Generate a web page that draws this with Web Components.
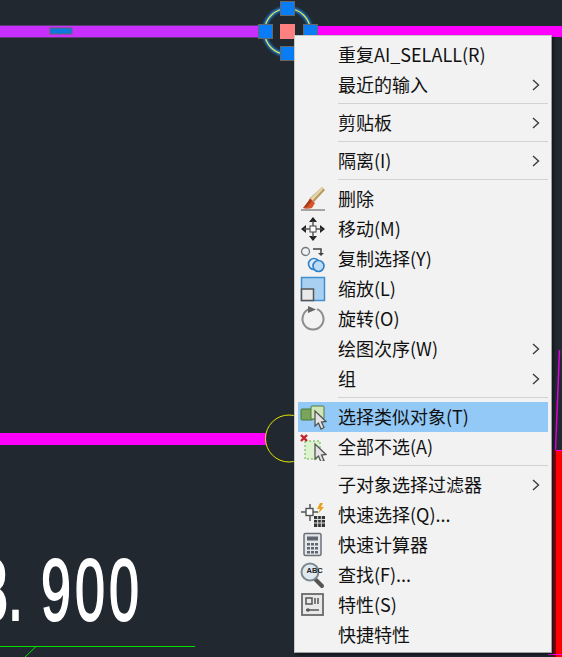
<!doctype html>
<html lang="zh">
<head>
<meta charset="utf-8">
<title>CAD context menu</title>
<style>
  html,body{margin:0;height:100%;background:#212830;overflow:hidden}
  body{position:relative;width:562px;height:657px}
</style>
</head>
<body>
<cad-canvas></cad-canvas>
<cad-menu>
  <cad-item>重复AI_SELALL(R)</cad-item>
  <cad-item sub>最近的输入</cad-item>
  <cad-sep></cad-sep>
  <cad-item sub>剪贴板</cad-item>
  <cad-sep></cad-sep>
  <cad-item sub>隔离(I)</cad-item>
  <cad-sep></cad-sep>
  <cad-item icon="erase">删除</cad-item>
  <cad-item icon="move">移动(M)</cad-item>
  <cad-item icon="copy">复制选择(Y)</cad-item>
  <cad-item icon="scale">缩放(L)</cad-item>
  <cad-item icon="rotate">旋转(O)</cad-item>
  <cad-item sub>绘图次序(W)</cad-item>
  <cad-item sub>组</cad-item>
  <cad-sep></cad-sep>
  <cad-item icon="similar" active>选择类似对象(T)</cad-item>
  <cad-item icon="deselect">全部不选(A)</cad-item>
  <cad-sep></cad-sep>
  <cad-item sub>子对象选择过滤器</cad-item>
  <cad-item icon="qselect">快速选择(Q)...</cad-item>
  <cad-item icon="calc">快速计算器</cad-item>
  <cad-item icon="find">查找(F)...</cad-item>
  <cad-item icon="props">特性(S)</cad-item>
  <cad-item>快捷特性</cad-item>
</cad-menu>
<script>
const ICONS = {
  erase: `<path d="M1 24h24" stroke="#8a8a8a" stroke-width="1.500"/><path d="M22 1l3 3-11 12-4-4z" fill="#b89a60"/><path d="M22 1l1.500 1.500-11 12-2-2z" fill="#e6d6ae"/><path d="M10 12l5 5-3 5c-3 1-7 1-9 0 3-2 5-6 7-10z" fill="#d9552b"/><path d="M10 13l2 2-5 6-4 1z" fill="#a83c1a"/>`,
  move: `<rect x="10" y="10" width="6" height="6" fill="#fff" stroke="#444"/><g fill="#222"><path d="M13 1l4 5h-8z"/><path d="M13 25l4-5h-8z"/><path d="M1 13l5-4v8z"/><path d="M25 13l-5-4v8z"/></g><path d="M13 5v5M13 16v5M4 13h6M16 13h6" stroke="#555" stroke-width="1.500"/>`,
  copy: `<circle cx="5.500" cy="5.500" r="4" fill="#eef2f6" stroke="#777" stroke-width="1.300"/><path d="M13 3h8v5" fill="none" stroke="#444" stroke-width="1.500"/><path d="M18 7l3 3 3-3z" fill="#444"/><circle cx="14" cy="18" r="5.500" fill="#dcecfa" stroke="#2f80c8" stroke-width="1.600"/><circle cx="18.500" cy="20" r="5.500" fill="#bcdcf6" stroke="#2f80c8" stroke-width="1.600"/>`,
  scale: `<rect x="1.500" y="1.500" width="23" height="23" fill="#a9d0f0" stroke="#3f8fd0" stroke-width="1.500"/><rect x="1.500" y="13" width="12" height="11.500" fill="#e9e9e9" stroke="#555" stroke-width="1.500"/>`,
  rotate: `<path d="M9 3.200A10.500 10.500 0 1 0 17 3.200" fill="none" stroke="#8c8c8c" stroke-width="2"/><path d="M8 0l8 3.500-8 3.500z" fill="#666"/>`,
  similar: `<rect x="1" y="5" width="12" height="11" rx="1" fill="#7aa35c" stroke="#4d7a38"/><rect x="11" y="2" width="13" height="13" rx="1" fill="#cfe4b8" stroke="#4d7a38"/><path d="M15 7v15l3.500-3 2.500 6 3-1.500-2.500-5.500 4.500-.5z" fill="#e4e4e4" stroke="#555" stroke-width="1.300"/>`,
  deselect: `<rect x="5" y="7" width="15" height="18" fill="#ddf3cf" stroke="#63ad4f" stroke-dasharray="2 2"/><path d="M1 1l6 6M7 1l-6 6" stroke="#c8202a" stroke-width="2.400"/><path d="M15 10v15l3.500-3 2.500 6 3-1.500-2.500-5.500 4.500-.5z" fill="#e4e4e4" stroke="#555" stroke-width="1.300"/>`,
  qselect: `<path d="M1 10h5M13 10h5M10 2v4M10 14v5" stroke="#555" stroke-width="1.500"/><rect x="6" y="6.500" width="7" height="7" fill="#fff" stroke="#555" stroke-width="1.400"/><path d="M20 1l-3 6h3l-2 5 6-7h-3l2-4z" fill="#e8a020"/><rect x="14" y="14" width="11" height="11" fill="#333"/><path d="M14 17.500h11M14 21h11M17.700 14v11M21.300 14v11" stroke="#ddd"/>`,
  calc: `<rect x="4" y="1.500" width="17" height="22" rx="1.500" fill="#e4e7ea" stroke="#6b7078" stroke-width="1.500"/><rect x="7" y="4.500" width="11" height="4" fill="#5f6670"/><g fill="#5f6670"><rect x="7" y="11" width="3" height="2.500"/><rect x="11" y="11" width="3" height="2.500"/><rect x="15" y="11" width="3" height="2.500"/><rect x="7" y="15" width="3" height="2.500"/><rect x="11" y="15" width="3" height="2.500"/><rect x="15" y="15" width="3" height="2.500"/><rect x="7" y="19" width="3" height="2.500"/><rect x="11" y="19" width="3" height="2.500"/><rect x="15" y="19" width="3" height="2.500"/></g>`,
  find: `<path d="M14 16l8 8" stroke="#555" stroke-width="4" stroke-linecap="round"/><circle cx="10" cy="10" r="8.500" fill="#dfeaf0" stroke="#7d8a92" stroke-width="2"/><text x="6.500" y="11" font-family="Liberation Sans,sans-serif" font-size="7.500" font-weight="700" fill="#222">ABC</text>`,
  props: `<rect x="2" y="2" width="21" height="21" fill="#e9e9e9" stroke="#6a6a6a" stroke-width="1.800"/><rect x="6" y="6" width="6" height="6" fill="none" stroke="#555" stroke-width="1.500"/><path d="M15 6v6M18 6v6M6 18h13" stroke="#555" stroke-width="1.500"/><circle cx="8" cy="18" r="1.800" fill="#555"/>`
};

class CadCanvas extends HTMLElement {
  constructor() { super(); this.attachShadow({ mode: "open" }); }
  connectedCallback() {
    this.shadowRoot.innerHTML = `
      <style>
        :host{position:absolute;inset:0;display:block;overflow:hidden;background:#212830}
        svg{position:absolute;left:0;top:0}
        .dim{position:absolute;left:-22px;top:534px;margin:0;color:#fff;white-space:nowrap;
          font:87px/112px "Liberation Sans",sans-serif;letter-spacing:0;-webkit-text-stroke:2px #fff;
          transform:scaleX(.62);transform-origin:0 0}
        .dim b{font-weight:400;letter-spacing:29px}
        .dim i{font-style:normal;letter-spacing:6.500px}
      </style>
      <svg width="562" height="657" viewBox="0 0 562 657">
        <defs><filter id="glow" x="-30%" y="-30%" width="160%" height="160%"><feGaussianBlur stdDeviation="1.200"/></filter></defs>
        <rect x="0" y="25" width="262" height="13" fill="#5d3a78"/>
        <rect x="0" y="26" width="262" height="11" fill="#c92fff"/>
        <rect x="50" y="28" width="22" height="6" fill="#0a7ae0" stroke="#666"/>
        <rect x="316" y="26" width="246" height="11" fill="#ff00ff"/>
        <circle cx="287.500" cy="31.500" r="23" fill="none" stroke="#1f7ad0" stroke-width="4" filter="url(#glow)"/>
        <circle cx="287.500" cy="31.500" r="23" fill="none" stroke="#e6e64a" stroke-width="1.200"/>
        <g fill="#0a7cf5" stroke="#666" stroke-width="1">
          <rect x="280.500" y="1.500" width="14" height="14"/>
          <rect x="258.500" y="24.500" width="14" height="14"/>
          <rect x="303.500" y="24.500" width="14" height="14"/>
          <rect x="280.500" y="46.500" width="14" height="14"/>
        </g>
        <rect x="280" y="24" width="15" height="15" fill="#ff8080"/>
        <rect x="0" y="433" width="266" height="12" fill="#ff00ff"/>
        <circle cx="289" cy="438.500" r="23.500" fill="none" stroke="#e6e600" stroke-width="1"/>
        <path d="M0 646.500H195M36 646.500L25 657" fill="none" stroke="#00e000" stroke-width="1"/>
        <path d="M559.500 350L555.500 450V657" fill="none" stroke="#e000e0" stroke-width="1.500"/>
        <rect x="556" y="450" width="6" height="207" fill="#ff0000"/>
        <rect x="553" y="450" width="3" height="207" fill="#8a0010"/>
        <path d="M556 450.500H562M548 654.500H562" stroke="#ff00ff" stroke-width="1"/>
      </svg>
      <p class="dim">3<b>.</b><i>900</i></p>`;
  }
}

class CadMenu extends HTMLElement {
  constructor() { super(); this.attachShadow({ mode: "open" }); }
  connectedCallback() {
    this.shadowRoot.innerHTML = `
      <style>
        :host{position:absolute;left:294px;top:35px;width:258px;height:618px;box-sizing:border-box;display:flex;flex-direction:column;
          padding:4px 3px 3px 3px;background:#f2f2f2;border:1px solid #a0a0a0;border-top-color:#c8c8c8;border-left-color:#c8c8c8;
          box-shadow:2px 2px 3px rgba(0,0,0,.45);
          font:18px "Noto Sans CJK SC","Noto Sans",sans-serif;color:#111}
      </style>
      <slot></slot>`;
  }
}

class CadItem extends HTMLElement {
  constructor() { super(); this.attachShadow({ mode: "open" }); }
  connectedCallback() {
    const icon = ICONS[this.getAttribute("icon")];
    this.shadowRoot.innerHTML = `
      <style>
        :host{display:grid;grid-template-columns:40px 1fr 16px;align-items:center;height:30px;flex:none}
        :host([active]){background:#92c9f7}
        .ic{display:flex;justify-content:center;padding-right:10px}
        .arrow{display:block}
        span{white-space:nowrap;line-height:28px;padding-bottom:2px}
      </style>
      <div class="ic">${icon ? `<svg width="27" height="27" viewBox="0 0 27 27">${icon}</svg>` : ""}</div>
      <span><slot></slot></span>
      ${this.hasAttribute("sub") ? `<svg class="arrow" width="8" height="12" viewBox="0 0 8 12"><path d="M1 1l5.500 5-5.500 5" fill="none" stroke="#3c3c3c" stroke-width="1.400"/></svg>` : "<i></i>"}`;
  }
}

class CadSep extends HTMLElement {
  constructor() { super(); this.attachShadow({ mode: "open" }); }
  connectedCallback() {
    this.shadowRoot.innerHTML = `
      <style>
        :host{display:block;flex:none;height:8px;box-sizing:border-box;padding:3px 0 4px 40px}
        div{height:1px;background:#d2d2d2}
      </style>
      <div></div>`;
  }
}

customElements.define("cad-canvas", CadCanvas);
customElements.define("cad-menu", CadMenu);
customElements.define("cad-item", CadItem);
customElements.define("cad-sep", CadSep);
</script>
</body>
</html>
